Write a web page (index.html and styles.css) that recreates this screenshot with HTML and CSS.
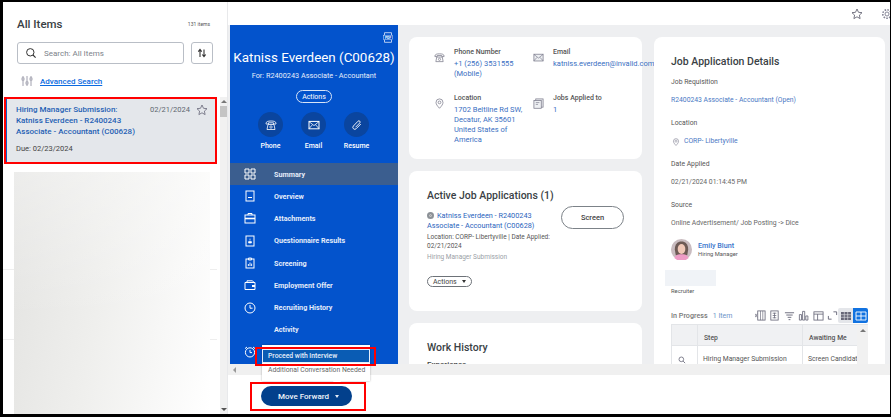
FILE: index.html
```html
<!DOCTYPE html>
<html lang="en">
<head>
<meta charset="utf-8">
<title>All Items</title>
<link rel="stylesheet" href="styles.css">
</head>
<body>
<div class="app">
  <aside class="side">
    <div class="side-head"><h1>All Items</h1><span class="count">131 items</span></div>
    <div class="search-row">
      <div class="search">
        <svg class="ic12" viewBox="0 0 12 12"><circle cx="5.3" cy="5.3" r="3.7" fill="none" stroke="#333" stroke-width="1"/><path d="M8 8l2.6 2.6" stroke="#333" stroke-width="1.1"/></svg>
        <span>Search: All Items</span>
      </div>
      <div class="sort"><svg class="ic12" viewBox="0 0 12 12"><path d="M4 10V3M2.3 4.6L4 2.4l1.7 2.2M8 2.5V9M6.3 7.5L8 9.7l1.7-2.2" fill="none" stroke="#333" stroke-width="1.1"/></svg></div>
    </div>
    <div class="adv">
      <svg class="ic12" viewBox="0 0 12 12"><path d="M2 1v10M6 1v10M10 1v10" stroke="#889" stroke-width=".8"/><rect x="1" y="3" width="2" height="2" fill="#fff" stroke="#889" stroke-width=".7"/><rect x="5" y="7" width="2" height="2" fill="#fff" stroke="#889" stroke-width=".7"/><rect x="9" y="3" width="2" height="2" fill="#fff" stroke="#889" stroke-width=".7"/></svg>
      <a>Advanced Search</a>
    </div>
    <div class="list-area">
      <div class="list">
        <div class="item">
          <div class="item-top">
            <div class="item-title">Hiring Manager Submission:<br>Katniss Everdeen - R2400243<br>Associate - Accountant (C00628)</div>
            <span class="item-date">02/21/2024</span>
            <svg class="star" viewBox="0 0 12 12"><path d="M6 1l1.5 3.3 3.5.4-2.6 2.4.7 3.5L6 8.8l-3.1 1.8.7-3.5L1 4.7l3.5-.4z" fill="none" stroke="#667" stroke-width=".8"/></svg>
          </div>
          <div class="item-due">Due: 02/23/2024</div>
        </div>
        <div class="blurred"></div>
      </div>
      <div class="vscroll">
        <i class="tri up"></i><b class="thumb"></b><i class="tri down"></i>
      </div>
    </div>
  </aside>

  <main class="main">
    <div class="topbar">
      <svg class="star-lg" viewBox="0 0 12 12"><path d="M6 1l1.5 3.3 3.5.4-2.6 2.4.7 3.5L6 8.8l-3.1 1.8.7-3.5L1 4.7l3.5-.4z" fill="none" stroke="#556" stroke-width=".8"/></svg>
      <svg class="gear" viewBox="0 0 12 12"><circle cx="6" cy="6" r="2" fill="none" stroke="#889" stroke-width="1"/><circle cx="6" cy="6" r="4.2" fill="none" stroke="#889" stroke-width="1.6" stroke-dasharray="1.6 1.2"/></svg>
    </div>
    <div class="middle">
      <nav class="blue">
        <div class="pdf-row"><svg class="ic10" viewBox="0 0 10 11"><path d="M1.500 3V.7h7V3M1.500 8v2.300h7V8" fill="none" stroke="#dfe9fa" stroke-width=".8"/><rect x=".4" y="3.200" width="9.200" height="4.400" fill="none" stroke="#dfe9fa" stroke-width=".5"/><text x="5" y="6.700" font-size="3.400" font-weight="700" text-anchor="middle" fill="#fff" font-family="Roboto, sans-serif">PDF</text></svg></div>
        <h2>Katniss Everdeen (C00628)</h2>
        <p class="for">For: R2400243 Associate - Accountant</p>
        <div class="actions-row"><span class="actions-pill">Actions</span></div>
        <div class="contact">
          <div class="contact-item"><span class="circle"><svg class="ic12" viewBox="0 0 12 12"><path d="M1 4.5C1 2.5 3 2 6 2s5 .5 5 2.5V5H8.5V3.8h-5V5H1zM3 5.5h6l1 5H2z" fill="none" stroke="#fff" stroke-width=".8"/><circle cx="6" cy="8" r="1.2" fill="none" stroke="#fff" stroke-width=".7"/></svg></span>Phone</div>
          <div class="contact-item"><span class="circle"><svg class="ic12" viewBox="0 0 12 12"><rect x="1" y="2.4" width="10" height="7.4" fill="none" stroke="#fff" stroke-width="1"/><path d="M1 2.6l5 4 5-4M1 9.6l3.4-3.8M11 9.6L7.6 5.8" fill="none" stroke="#fff" stroke-width=".8"/></svg></span>Email</div>
          <div class="contact-item"><span class="circle"><svg class="ic12" viewBox="0 0 12 12"><path d="M9.800 5L5.200 9.700a1.900 1.900 0 0 1-2.800-2.700L7 2.200a1.200 1.200 0 0 1 1.800 1.700L4.600 8.200" fill="none" stroke="#fff" stroke-width=".9"/></svg></span>Resume</div>
        </div>
        <ul class="nav">
          <li class="active"><svg class="nav-ic" viewBox="0 0 12 12"><path d="M1 1h4v4H1zM7 1h4v4H7zM1 7h4v4H1zM7 7h4v4H7z" fill="none" stroke="#fff" stroke-width="1"/></svg>Summary</li>
          <li><svg class="nav-ic" viewBox="0 0 12 12"><rect x="2" y="1" width="8" height="10" fill="none" stroke="#fff" stroke-width="1"/><path d="M4 7.5h4" stroke="#fff"/></svg>Overview</li>
          <li><svg class="nav-ic" viewBox="0 0 12 12"><path d="M4 3V1.5h4V3" fill="none" stroke="#fff"/><rect x="1" y="3" width="10" height="8" fill="none" stroke="#fff"/><path d="M1 6.5h10" stroke="#fff" stroke-width="1.6"/></svg>Attachments</li>
          <li><svg class="nav-ic" viewBox="0 0 12 12"><rect x="2" y="1" width="8" height="10" fill="none" stroke="#fff"/><path d="M6 3.6v2M4.6 8h2.8V6.6H4.6z" fill="#fff" stroke="#fff" stroke-width=".7"/></svg>Questionnaire Results</li>
          <li><svg class="nav-ic" viewBox="0 0 12 12"><rect x="2" y="2" width="8" height="9" fill="none" stroke="#fff"/><path d="M4.5 1h3v2h-3zM4.4 9V7M6 9V5.5M7.6 9V6.6" fill="none" stroke="#fff" stroke-width=".9"/></svg>Screening</li>
          <li><svg class="nav-ic" viewBox="0 0 12 12"><path d="M1 3.5h10v7H1zM3 3.5V1.8h5.5l1.5 1.7" fill="none" stroke="#fff"/><rect x="8" y="6" width="3" height="2" fill="#fff"/></svg>Employment Offer</li>
          <li><svg class="nav-ic" viewBox="0 0 12 12"><circle cx="6" cy="6" r="5" fill="none" stroke="#fff"/><path d="M6 3v3.2h2.6" fill="none" stroke="#fff"/></svg>Recruiting History</li>
          <li><span class="nav-gap"></span>Activity</li>
          <li><svg class="nav-ic" viewBox="0 0 12 12"><circle cx="6" cy="6.4" r="4.6" fill="none" stroke="#fff"/><path d="M6 4v2.6h2M1 2.6L3 1M11 2.6L9 1" fill="none" stroke="#fff"/></svg></li>
        </ul>
      </nav>
      <div class="content">
        <div class="col col-a">
          <section class="card card-contact">
            <div class="cgrid">
              <div class="citem">
                <svg class="gi" viewBox="0 0 12 12"><path d="M1 4.5C1 2.5 3 2 6 2s5 .5 5 2.5V5H8.5V3.8h-5V5H1zM3 5.5h6l1 5H2z" fill="none" stroke="#778" stroke-width=".8"/><circle cx="6" cy="8" r="1.2" fill="none" stroke="#778" stroke-width=".7"/></svg>
                <div><div class="lbl">Phone Number</div><div class="val">+1 (256) 3531555<br>(Mobile)</div></div>
              </div>
              <div class="citem">
                <svg class="gi" viewBox="0 0 12 12"><rect x="1" y="2.4" width="10" height="7.4" fill="#eef0f3" stroke="#778" stroke-width=".8"/><path d="M1 2.6l5 4 5-4M1 9.6l3.4-3.8M11 9.6L7.6 5.8" fill="none" stroke="#778" stroke-width=".7"/></svg>
                <div><div class="lbl">Email</div><div class="val nowrap">katniss.everdeen@invalid.com</div></div>
              </div>
              <div class="citem">
                <svg class="gi" viewBox="0 0 12 12"><path d="M6 11.2C3.6 8.6 2.2 6.8 2.2 4.8a3.8 3.8 0 0 1 7.6 0c0 2-1.4 3.8-3.8 6.4z" fill="none" stroke="#778" stroke-width=".8"/><circle cx="6" cy="4.8" r="1.5" fill="none" stroke="#778" stroke-width=".8"/></svg>
                <div><div class="lbl">Location</div><div class="val">1702 Beltline Rd SW,<br>Decatur, AK 35601<br>United States of<br>America</div></div>
              </div>
              <div class="citem">
                <svg class="gi" viewBox="0 0 12 12"><rect x="3" y="1" width="8" height="9" fill="#eef0f3" stroke="#778" stroke-width=".8"/><rect x="1" y="2.6" width="8" height="8.6" fill="#eef0f3" stroke="#778" stroke-width=".8"/><path d="M3 5h4M3 7h2.5" stroke="#778" stroke-width=".7"/></svg>
                <div><div class="lbl">Jobs Applied to</div><div class="val">1</div></div>
              </div>
            </div>
          </section>
          <section class="card card-active">
            <h3>Active Job Applications (1)</h3>
            <div class="app-row">
              <div class="app-text">
                <div class="val app-link"><i class="dot"></i>Katniss Everdeen - R2400243<br>Associate - Accountant (C00628)</div>
                <div class="app-meta">Location: CORP- Libertyville | Date Applied:<br>02/21/2024</div>
              </div>
              <span class="screen">Screen</span>
            </div>
            <div class="app-status">Hiring Manager Submission</div>
            <span class="actions-mini">Actions<i class="tri-d"></i></span>
          </section>
          <section class="card card-work">
            <h3>Work History</h3>
            <div class="exp">Experience</div>
          </section>
        </div>
        <div class="col col-b">
          <section class="card card-details">
            <h3>Job Application Details</h3>
            <div class="dlabel first">Job Requisition</div>
            <div class="dvalue link">R2400243 Associate - Accountant (Open)</div>
            <div class="dlabel">Location</div>
            <div class="dvalue link"><svg class="pin" viewBox="0 0 12 12"><path d="M6 11.2C3.6 8.6 2.2 6.8 2.2 4.8a3.8 3.8 0 0 1 7.6 0c0 2-1.4 3.8-3.8 6.4z" fill="none" stroke="#889" stroke-width="1"/><circle cx="6" cy="4.8" r="1.5" fill="none" stroke="#889" stroke-width=".9"/></svg>CORP- Libertyville</div>
            <div class="dlabel">Date Applied</div>
            <div class="dvalue">02/21/2024 01:14:45 PM</div>
            <div class="dlabel">Source</div>
            <div class="dvalue">Online Advertisement/ Job Posting -&gt; Dice</div>
            <div class="person">
              <svg class="avatar" viewBox="0 0 22 22"><circle cx="11" cy="11" r="11" fill="#c9bcc0"/><path d="M4 11C4 5 7 2.500 11 2.500S18 5 18 11l-1 6H5z" fill="#6d5a55"/><ellipse cx="11" cy="10.500" rx="4" ry="5.200" fill="#f0c8b8"/><path d="M3.500 20c1.500-3.500 4-4 7.500-4s6 .5 7.500 4a11 11 0 0 1-15 0z" fill="#ee9cc6"/></svg>
              <div><div class="pname">Emily Blunt</div><div class="prole">Hiring Manager</div></div>
            </div>
            <div class="redacted"></div>
            <div class="recruiter">Recruiter</div>
            <div class="grid-head">
              <span class="ip">In Progress</span><span class="ip-n">1 Item</span>
              <span class="tools">
                <svg viewBox="0 0 12 12"><rect x="3" y="1" width="8" height="10" fill="none" stroke="#667" stroke-width=".9"/><path d="M6 1v10M8.500 1v10M0 4l2.500 4M2.500 4L0 8" stroke="#667" stroke-width=".7" fill="none"/></svg>
                <svg viewBox="0 0 12 12"><rect x="2" y="1" width="8" height="10" fill="none" stroke="#667" stroke-width=".9"/><path d="M4 3.500h4M4 6h4M4 8.500h4M6 3v6" stroke="#667" stroke-width=".8"/></svg>
                <svg viewBox="0 0 12 12"><path d="M1 3h10M2.500 5.500h7M4 8h4M5 10.500h2" stroke="#667"/></svg>
                <svg viewBox="0 0 12 12"><path d="M1.500 11V5h2.300v6zM5 11V1.500h2.300V11zM8.500 11V6.500h2.300V11z" fill="none" stroke="#667" stroke-width=".9"/></svg>
                <svg viewBox="0 0 12 12"><rect x="1" y="2" width="10" height="9" fill="none" stroke="#667" stroke-width=".9"/><path d="M1 4.500h10M5 4.500V11" stroke="#667" stroke-width=".9"/></svg>
                <svg viewBox="0 0 12 12"><path d="M7 2h3.500v3.500M5 10H1.500V6.500" fill="none" stroke="#667" stroke-width="1"/></svg>
              </span>
              <span class="toggle off"><svg viewBox="0 0 12 12"><path d="M1 2h10v8H1z" fill="#667"/><path d="M1 4.700h10M1 7.300h10M4.300 2v8M7.700 2v8" stroke="#e4e6ea" stroke-width=".6"/></svg></span>
              <span class="toggle on"><svg viewBox="0 0 12 12"><path d="M1 2h10v8H1zM1 6h10M6 2v8" fill="none" stroke="#fff" stroke-width=".9"/></svg></span>
            </div>
            <div class="table">
              <div class="tcols thead"><span class="c1"></span><span class="c2">Step</span><span class="c3">Awaiting Me</span></div>
              <div class="tcols tbody"><span class="c1"><svg class="mag" viewBox="0 0 12 12"><circle cx="5" cy="5" r="3.500" fill="none" stroke="#667" stroke-width="1.200"/><path d="M7.700 7.700l3 3" stroke="#667" stroke-width="1.300"/></svg></span><span class="c2">Hiring Manager Submission</span><span class="c3">Screen Candidate</span></div>
              <div class="tscroll"><i class="tri up"></i></div>
            </div>
          </section>
        </div>
      </div>
    </div>
    <div class="hscroll"><i class="tri left"></i></div>
    <div class="bottom">
      <button class="forward">Move Forward<i class="tri-w"></i></button>
    </div>
    <div class="menu">
      <div class="menu-item sel">Proceed with Interview</div>
      <div class="menu-item">Additional Conversation Needed</div>
      <i class="menu-tail"></i>
    </div>
    <div class="red red-menu"></div>
    <div class="red red-btn"></div>
  </main>
</div>
</body>
</html>
```

FILE: styles.css
```css
* { box-sizing: border-box; }
html, body { margin: 0; padding: 0; }
body { width: 891px; height: 417px; overflow: hidden; background: #fff; font-family: Roboto, "Liberation Sans", sans-serif; color: #333; }
h1, h2, h3, p, ul { margin: 0; padding: 0; }
ul { list-style: none; }
svg { display: block; flex: none; }
i { display: block; font-style: normal; }

.app { width: 891px; height: 417px; border: solid #000; border-width: 2px 1px 3px 3px; display: flex; background: #fff; }
.ic12 { width: 12px; height: 12px; }
.ic10 { width: 10px; height: 11px; }

/* left column */
.side { width: 225px; flex: none; display: flex; flex-direction: column; border-right: 1px solid #e8e9eb; }
.side-head { display: flex; justify-content: space-between; align-items: center; height: 18px; margin-top: 13px; padding: 0 17px 0 14px; }
.side-head h1 { font-size: 11.500px; font-weight: 500; color: #3a3f45; }
.count { font-size: 5px; color: #555; }
.search-row { display: flex; gap: 7px; margin: 9px 0 0 14px; }
.search { width: 167px; height: 22px; border: 1px solid #b9bec6; border-radius: 3px; display: flex; align-items: center; gap: 7px; padding-left: 7px; font-size: 8px; color: #7c828a; }
.sort { width: 22px; height: 22px; border: 1px solid #b9bec6; border-radius: 3px; display: flex; align-items: center; justify-content: center; }
.adv { display: flex; align-items: center; gap: 7px; margin: 10px 0 0 17px; height: 14px; }
.adv svg { margin-left: 1px; }
.adv a { font-size: 8px; font-weight: 500; color: #0b6be0; text-decoration: underline; }
.list-area { flex: 1; display: flex; min-height: 0; margin-top: 9px; overflow: hidden; }
.list { width: 214px; flex: none; position: relative; background: linear-gradient(#eeeeee, #eeeeee) 0 172px / 214px 1px no-repeat, linear-gradient(#eeeeee, #eeeeee) 0 242px / 214px 1px no-repeat; }
.item { margin-left: 1px; width: 213px; height: 67px; border: 2px solid #f00; background: #e4e7eb; box-shadow: inset 1px 0 0 #0b5cc4; padding: 5px 0 0 10px; }
.item-top { display: flex; font-size: 8px; }
.item-title { width: 134px; color: #1f5fb4; font-weight: 500; line-height: 11.200px; }
.item-date { font-size: 7.500px; color: #5f6770; margin-top: 1px; }
.star { width: 12px; height: 12px; margin-left: 6px; }
.item-due { font-size: 7.500px; color: #444; margin-top: 6px; }
.blurred { height: 242px; margin: 8px 7px 0 11px; width: 196px; background: linear-gradient(rgba(255,255,255,.35), rgba(255,255,255,0) 60%), linear-gradient(100deg, #e3e3e1 0%, #efefed 45%, #fff 100%); }
.vscroll { flex: 1; background: #f1f1f1; display: flex; flex-direction: column; align-items: center; padding-top: 3px; margin-left: 3px; position: relative; }
.thumb { width: 8px; height: 11px; background: #c4c4c4; margin-top: 3px; }
.vscroll .down { margin-top: auto; margin-bottom: 3px; }
.tri { width: 0; height: 0; }
.tri.up { border: 3px solid transparent; border-top: 0; border-bottom: 3px solid #777; }
.tri.down { border: 3px solid transparent; border-bottom: 0; border-top: 3px solid #555; }
.tri.left { border: 3px solid transparent; border-left: 0; border-right: 3px solid #999; }

/* main */
.main { flex: 1; min-width: 0; display: flex; flex-direction: column; position: relative; }
.topbar { height: 23px; flex: none; display: flex; justify-content: flex-end; align-items: center; gap: 18px; overflow: hidden; background: #fff; }
.star-lg { width: 12px; height: 12px; margin-top: 1px; }
.gear { width: 12px; height: 12px; margin-top: 1px; margin-right: -3px; }
.middle { height: 339px; flex: none; display: flex; overflow: hidden; background: #eeeff1; }

/* blue panel */
.blue { width: 168px; flex: none; margin-left: 2px; background: #0353cc; color: #fff; overflow: hidden; }
.pdf-row { display: flex; justify-content: flex-end; padding: 7px 5px 0 0; height: 18px; }
.blue h2 { font-size: 13.400px; font-weight: 400; text-align: center; line-height: 18px; margin-top: 6px; white-space: nowrap; }
.for { font-size: 7.300px; text-align: center; line-height: 10px; margin-top: 4px; color: #e6eefb; }
.actions-row { display: flex; justify-content: center; margin-top: 9px; }
.actions-pill { width: 36px; height: 13px; border: 1px solid #d8e4f7; border-radius: 7px; font-size: 7px; display: flex; align-items: center; justify-content: center; }
.contact { display: flex; justify-content: center; gap: 17px; margin-top: 9px; padding-right: 1px; }
.contact-item { width: 26px; display: flex; flex-direction: column; align-items: center; font-size: 7px; font-weight: 500; white-space: nowrap; gap: 5px; }
.circle { width: 25px; height: 25px; border-radius: 50%; background: #0a459f; display: flex; align-items: center; justify-content: center; }
.nav { margin-top: 13px; }
.nav li { height: 22.300px; display: flex; align-items: center; padding-left: 14px; font-size: 7.200px; font-weight: 700; color: #e4ecfa; white-space: nowrap; }
.nav li.active { background: #3b5e8f; height: 22px; }
.nav-ic { width: 12px; height: 12px; margin-right: 18px; }
.nav-gap { width: 30px; }

/* cards */
.content { flex: 1; min-width: 0; display: flex; gap: 12px; padding: 12px 0 0 11px; overflow: hidden; align-items: flex-start; }
.col { display: flex; flex-direction: column; gap: 12px; flex: none; }
.col-a { width: 233px; }
.col-b { width: 231px; }
.card { background: #fff; border-radius: 8px; }
.card h3 { font-size: 10.500px; font-weight: 500; color: #3a3f45; }
.card-contact { height: 122px; padding: 11px 0 0 25px; }
.cgrid { display: grid; grid-template-columns: 99px 120px; grid-template-rows: 46px auto; }
.citem { display: flex; gap: 9px; }
.gi { width: 11px; height: 11px; margin-top: 4px; }
.citem > div { white-space: nowrap; }
.lbl { font-size: 7px; font-weight: 500; color: #555; line-height: 9px; }
.val { font-size: 7.500px; color: #3a6fc2; line-height: 10px; margin-top: 2px; }
.nowrap { white-space: nowrap; }

.card-active { height: 140px; padding: 18px 0 0 18px; }
.app-row { display: flex; margin-top: 9px; }
.app-text { width: 134px; }
.app-link { margin: 0; font-size: 7.300px; line-height: 9.500px; color: #2a64bd; position: relative; }
.dot { display: inline-block; width: 7px; height: 7px; border-radius: 50%; background: #8c9197; border: 2px solid #8c9197; box-shadow: inset 0 0 0 1px #ccc; margin-right: 3px; vertical-align: -1px; }
.app-meta { font-size: 6.500px; color: #555; line-height: 8.500px; margin-top: 3px; white-space: nowrap; }
.screen { width: 63px; height: 23px; border: 1px solid #7c8288; border-radius: 12px; font-size: 7.500px; font-weight: 500; display: flex; align-items: center; justify-content: center; color: #444; margin-left: 0; margin-top: -5px; }
.app-status { font-size: 6.500px; color: #9aa0a6; margin-top: 3px; line-height: 9px; }
.actions-mini { display: inline-flex; align-items: center; justify-content: space-between; width: 45px; height: 11px; margin-top: 14px; padding: 0 5px; border: 1px solid #6d7278; border-radius: 6px; font-size: 7px; color: #444; }
.tri-d { width: 0; height: 0; border: 2.500px solid transparent; border-bottom: 0; border-top: 3px solid #333; }
.card-work { height: 70px; padding: 18px 0 0 18px; }
.exp { font-size: 8px; font-weight: 500; color: #444; margin-top: 6px; }

.card-details { height: 340px; padding: 18px 0 0 17px; position: relative; overflow: hidden; }
.dlabel { font-size: 6.800px; color: #555; line-height: 9px; margin-top: 14px; }
.dlabel.first { margin-top: 10px; }
.dvalue { font-size: 6.800px; color: #666; line-height: 9px; margin-top: 9px; white-space: nowrap; display: flex; align-items: center; }
.dvalue.link { color: #4a78c4; }
.pin { width: 8px; height: 8px; margin-right: 4px; margin-left: 1px; }
.person { display: flex; align-items: center; gap: 6px; margin-top: 11px; }
.avatar { width: 21px; height: 21px; }
.pname { font-size: 7.200px; color: #3a76cc; font-weight: 500; line-height: 9px; }
.prole { font-size: 5.800px; color: #555; line-height: 8px; }
.redacted { width: 51px; height: 16px; background: #f0f3f7; margin: 10px 0 0 -6px; }
.recruiter { font-size: 5.800px; color: #555; line-height: 8px; margin-top: 1px; }
.grid-head { display: flex; align-items: center; height: 15px; margin-top: 13px; width: 197px; white-space: nowrap; }
.ip { font-size: 7.200px; color: #777; font-weight: 500; flex: none; }
.ip-n { font-size: 7px; color: #6d93c8; margin-left: 5px; flex: none; }
.tools { display: flex; gap: 3.500px; margin-left: auto; margin-right: 0; flex: none; }
.tools svg { width: 11px; height: 11px; }
.toggle { width: 15px; height: 15px; display: flex; align-items: center; justify-content: center; flex: none; }
.toggle svg { width: 12px; height: 12px; }
.toggle.off { background: #e4e6ea; margin-left: 0; border-radius: 2px 0 0 2px; }
.toggle.on { background: #1172e0; border-radius: 0 2px 2px 0; }
.table { width: 197px; margin-top: 1px; position: relative; border: 1px solid #e3e5e8; border-width: 1px 0 0 1px; }
.tcols { display: flex; width: 186px; overflow: hidden; font-size: 6.800px; color: #555; white-space: nowrap; }
.thead { height: 21px; background: #f0f1f3; border-bottom: 1px solid #e3e5e8; font-weight: 500; }
.tbody { height: 30px; }
.tcols span { display: block; border-right: 1px solid #e3e5e8; flex: none; }
.thead span { height: 20px; line-height: 26px; }
.tbody span { line-height: 27px; }
.c1 { width: 26px; }
.c2 { width: 105px; padding-left: 5px; }
.c3 { width: 55px; padding-left: 5px; border-right: 0 !important; overflow: hidden; }
.thead .c2, .thead .c3 { padding-left: 6px; }
.mag { width: 8px; height: 8px; margin: 10px 0 0 6px; }
.tscroll { position: absolute; top: 0; right: 0; width: 11px; height: 60px; background: #f1f1f1; display: flex; justify-content: center; padding-top: 4px; }

.hscroll { height: 11px; flex: none; background: #f0f0f0; padding: 3px 0 0 5px; }
.bottom { flex: 1; display: flex; align-items: flex-start; padding: 11px 0 0 33px; background: #fff; }
.forward { width: 91px; height: 20px; border: 0; border-radius: 10px; background: #02408c; color: #f0f4fa; font: 500 8px Roboto, "Liberation Sans", sans-serif; display: flex; align-items: center; justify-content: center; gap: 6px; padding: 0 0 0 4px; }
.tri-w { width: 0; height: 0; border: 2.300px solid transparent; border-bottom: 0; border-top: 3px solid #e6edf7; }

/* overlays */
.menu { position: absolute; left: 34px; top: 343px; width: 108px; height: 36px; background: #fff; box-shadow: 0 0 2px rgba(0,0,0,.3); padding-top: 4px; z-index: 2; }
.menu-item { height: 14px; font-size: 6.800px; color: #666; padding-left: 6px; line-height: 14px; white-space: nowrap; }
.menu-item.sel { background: #0a5cb4; color: #e8f0fa; font-weight: 500; outline: 1px solid #e6eefa; outline-offset: -1px; }
.menu-tail { position: absolute; left: 72px; bottom: -3px; width: 6px; height: 6px; background: #fff; transform: rotate(45deg); }
.red { position: absolute; border: 2px solid #f00; z-index: 3; }
.red-menu { left: 27px; top: 345px; width: 121px; height: 19px; }
.red-btn { left: 22px; top: 380px; width: 116px; height: 29px; }
```
